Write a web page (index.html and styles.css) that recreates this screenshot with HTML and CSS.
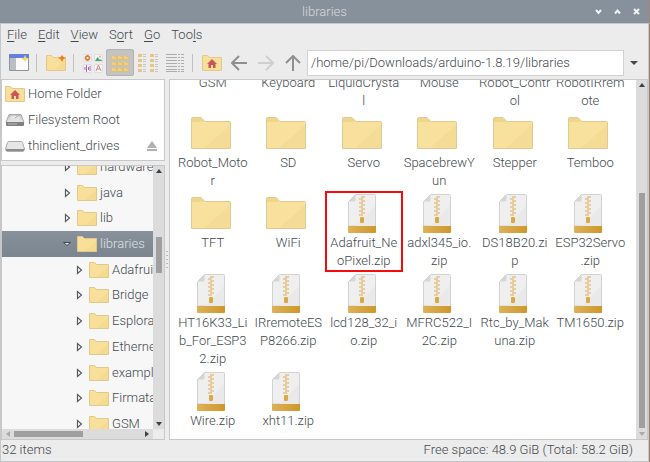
FILE: index.html
```html
<!DOCTYPE html>
<html lang="en">
<head>
<meta charset="utf-8">
<title>libraries</title>
<link rel="stylesheet" href="styles.css">
</head>
<body>
<svg class="defs" aria-hidden="true">
  <defs>
    <linearGradient id="gold" x1="0" x2="1"><stop offset="0" stop-color="#ddb25a"/><stop offset="1" stop-color="#cf972a"/></linearGradient>
    <linearGradient id="metal" x1="0" x2="0" y1="0" y2="1"><stop offset="0" stop-color="#bdbdbd"/><stop offset="1" stop-color="#ececec"/></linearGradient>
    <symbol id="folder" viewBox="0 0 40 40">
      <path d="M.5 34.500V4.500q0-1 1-1h8.500l4 4h24.500q1 0 1 1v26z" fill="#f8e19c" stroke="#e0ca93"/>
      <path d="M1 8V4h9l3.500 4z" fill="#f0d58c"/>
      <path d="M39 11v23H13z" fill="#f4dc96"/>
    </symbol>
    <symbol id="small-folder" viewBox="0 0 20 18">
      <path d="M.5 16.500v-15h5l2 2h12v13z" fill="#f8e09a" stroke="#e2c88a"/>
      <path d="M19 6v10H8z" fill="#f5db92"/>
    </symbol>
    <symbol id="home" viewBox="0 0 20 18">
      <path d="M.5 16.500v-15h5l2 2h12v13z" fill="#f8e09a" stroke="#e2c88a"/>
      <path d="M10 5l5 5h-1.500v4h-2.500v-3h-2v3H6.500v-4H5z" fill="#cc5555"/>
    </symbol>
    <symbol id="zip" viewBox="0 0 28 40">
      <path d="M.5 32V7.500l7-7h19q1 0 1 1V32z" fill="#efefef" stroke="#d2d2d2"/>
      <path d="M27 12v20H8z" fill="#e9e9e9"/>
      <path d="M.5 7.500l7-7v5.500q0 1.500-1.500 1.500z" fill="#d6d6d6"/>
      <path d="M0 32h28v6q0 1-1 1H1q-1 0-1-1z" fill="url(#gold)"/>
      <path d="M13 3h4M11 5h4M13 7h4M11 9h4M13 11h4M11 13h4M13 15h4M11 17h4M13 19h4M11 21h4" stroke="#e3c184" stroke-width="1.400"/>
      <rect x="12" y="23" width="4" height="6" rx="1" fill="#dba943"/>
    </symbol>
    <symbol id="closed" viewBox="0 0 10 12"><path d="M3.500 2.500v7l4-3.500z" fill="#fff" stroke="#555b60" stroke-width="1.200"/></symbol>
    <symbol id="open" viewBox="0 0 10 12"><path d="M1.500 4.500h7l-3.500 3z" fill="#e8eaec" stroke="#3d454c"/></symbol>
  </defs>
</svg>
<div class="window">
  <header class="titlebar">
    <h1>libraries</h1>
    <div class="controls">
      <button aria-label="Minimize"><svg width="9" height="9"><path d="M2 3l2.500 3L7 3"/></svg></button>
      <button aria-label="Maximize"><svg width="9" height="9"><path d="M2 6.500l2.500-3L7 6.500"/></svg></button>
      <button aria-label="Close"><svg width="9" height="9"><path d="M2 2l5 5M7 2L2 7"/></svg></button>
    </div>
  </header>
  <nav class="menubar">
    <button><u>F</u>ile</button><button><u>E</u>dit</button><button><u>V</u>iew</button><button>S<u>o</u>rt</button><button><u>G</u>o</button><button>Too<u>l</u>s</button>
  </nav>
  <div class="toolbar">
    <button aria-label="New window"><svg width="20" height="18"><path d="M.5.500h19v16H.500z" fill="#fafafa" stroke="#8f939b"/><path d="M0 0h20v4H0z" fill="#6580dc"/><path d="M1 4h6v12H1z" fill="#bcbfc2"/><path d="M16 1l1.200 2.600L20 5l-2.800 1L16 8l-1-2-3-1 3-1.400z" fill="#f7d472"/></svg></button>
    <span class="sep"></span>
    <button aria-label="New folder"><svg width="20" height="18"><use href="#small-folder"/><path d="M16 1l1.500 2 2.500 1-2.500 1L16 8l-1.500-3L12 4l2.500-1z" fill="#f27d1b"/></svg></button>
    <span class="sep"></span>
    <button aria-label="Thumbnail view"><svg width="20" height="20"><path d="M.500 1.500h8v7h-8zM11.500 1.500h8v7h-8zM.500 11.500h8v8h-8zM11.500 11.500h8v8h-8z" fill="#f7f7f7" stroke="#dfdfdf"/><circle cx="4.500" cy="5" r="2" fill="none" stroke="#d9803f" stroke-width="1.800"/><path d="M12 8l2.500-4L17 7l1-1 1 2z" fill="#4fa77d"/><circle cx="17" cy="3.500" r="1" fill="#e7ae51"/><path d="M2 14v3M3.500 12v7M5.500 14v3M7 13v5" stroke="#b565bb"/><path d="M13 18l2.500-6 2.500 6M14 16h3" fill="none" stroke="#d98787"/></svg></button>
    <button class="active" aria-label="Icon view"><svg width="20" height="20"><g fill="#ecd088" stroke="#ddbf78"><path id="mini" d="M1.500 2.500h2l1 1h2v3h-5z"/><use href="#mini" x="6"/><use href="#mini" x="12"/><use href="#mini" y="6"/><use href="#mini" x="6" y="6"/><use href="#mini" x="12" y="6"/><use href="#mini" y="12"/><use href="#mini" x="6" y="12"/><use href="#mini" x="12" y="12"/></g></svg></button>
    <button aria-label="Compact view"><svg width="20" height="20"><path d="M0 2.500h4M0 7.500h4M0 12.500h4M0 17.500h4M12 2.500h4M12 7.500h4M12 12.500h4M12 17.500h4" stroke="#e3c782" stroke-width="3"/><path d="M5 1.500h3M5 3.500h3M5 6.500h3M5 8.500h3M5 11.500h3M5 13.500h3M5 16.500h3M5 18.500h3M17 1.500h3M17 3.500h3M17 6.500h3M17 8.500h3M17 11.500h3M17 13.500h3M17 16.500h3M17 18.500h3" stroke="#c7c7c7"/></svg></button>
    <button aria-label="List view"><svg width="18" height="20"><path d="M0 1.500h18M0 4.500h18M0 7.500h18M0 10.500h18M0 13.500h18M0 16.500h18M0 18.500h18" stroke="#acacac" stroke-dasharray="11 1 2 1"/></svg></button>
    <span class="sep"></span>
    <button aria-label="Home"><svg width="20" height="18"><use href="#home"/></svg></button>
    <button aria-label="Back"><svg class="arrow" width="16" height="16"><path d="M16 8H1M8 1L1 8l7 7"/></svg></button>
    <button aria-label="Forward" disabled><svg class="arrow faded" width="16" height="16"><path d="M0 8h15M8 1l7 7-7 7"/></svg></button>
    <button aria-label="Up"><svg class="arrow" width="16" height="16"><path d="M8 16V1M1 8l7-7 7 7"/></svg></button>
    <input class="path" aria-label="Location" value="/home/pi/Downloads/arduino-1.8.19/libraries">
    <button class="drop" aria-label="Recent locations"><svg width="8" height="4"><path d="M0 0h8L4 4z" fill="#41474c"/></svg></button>
  </div>
  <main class="panes">
    <aside class="side">
      <ul class="places">
        <li><svg width="20" height="18"><use href="#home"/></svg>Home Folder</li>
        <li><svg width="20" height="18"><path d="M4 3.500h12l3 8H1z" fill="url(#metal)" stroke="#a8a8a8"/><ellipse cx="10" cy="7" rx="5" ry="2.500" fill="#e4e4e4"/><path d="M10 7l4-3" stroke="#aaa"/><path d="M1 11h18v3q0 1-1 1H2q-1 0-1-1z" fill="#808080"/><path d="M3 13h9" stroke="#bbb"/></svg>Filesystem Root</li>
        <li><svg width="20" height="18"><path d="M4 4.500h12q1 0 1.500 1l2 6.500q0 2-1.500 2H2q-1.500 0-1.500-2l2-6.500q.5-1 1.500-1z" fill="#e6e6e6" stroke="#aaa"/><path d="M1 12h18v1q0 1.500-1.500 1.500h-15Q1 14.500 1 13z" fill="#8c8c8c"/></svg>thinclient_drives<button class="eject" aria-label="Eject"><svg width="10" height="10"><path d="M0 7l5-7 5 7zM0 8h10v2H0z" fill="#aeb0b1"/></svg></button></li>
      </ul>
      <div class="tree">
        <div class="tree-view">
          <ul>
            <li><svg width="10" height="12"><use href="#closed"/></svg><svg class="f" width="20" height="18"><use href="#small-folder"/></svg>hardware</li>
            <li><svg width="10" height="12"><use href="#closed"/></svg><svg class="f" width="20" height="18"><use href="#small-folder"/></svg>java</li>
            <li><svg width="10" height="12"><use href="#closed"/></svg><svg class="f" width="20" height="18"><use href="#small-folder"/></svg>lib</li>
            <li class="selected"><svg width="10" height="12"><use href="#open"/></svg><svg class="f" width="20" height="18"><use href="#small-folder"/></svg>libraries</li>
            <li class="child"><svg width="10" height="12"><use href="#closed"/></svg><svg class="f" width="20" height="18"><use href="#small-folder"/></svg>Adafruit</li>
            <li class="child"><svg width="10" height="12"><use href="#closed"/></svg><svg class="f" width="20" height="18"><use href="#small-folder"/></svg>Bridge</li>
            <li class="child"><svg width="10" height="12"><use href="#closed"/></svg><svg class="f" width="20" height="18"><use href="#small-folder"/></svg>Esplora</li>
            <li class="child"><svg width="10" height="12"><use href="#closed"/></svg><svg class="f" width="20" height="18"><use href="#small-folder"/></svg>Ethernet</li>
            <li class="child"><svg width="10" height="12"><use href="#closed"/></svg><svg class="f" width="20" height="18"><use href="#small-folder"/></svg>example</li>
            <li class="child"><svg width="10" height="12"><use href="#closed"/></svg><svg class="f" width="20" height="18"><use href="#small-folder"/></svg>Firmata</li>
            <li class="child"><svg width="10" height="12"><use href="#closed"/></svg><svg class="f" width="20" height="18"><use href="#small-folder"/></svg>GSM</li>
          </ul>
        </div>
        <div class="vbar tree-bar"><svg width="8" height="4"><path d="M1 4h6L4 0z"/></svg><div class="track"><i></i></div><svg width="8" height="4"><path d="M1 0h6L4 4z"/></svg></div>
        <div class="hbar"><svg class="dim" width="4" height="8"><path d="M4 1v6L0 4z"/></svg><div class="track"><i></i></div><svg width="4" height="8"><path d="M0 1v6l4-3z"/></svg></div>
        <div class="corner"></div>
      </div>
    </aside>
    <div class="splitter"><svg width="2" height="20"><path d="M1 1v19" stroke="#b9b9b9" stroke-width="2" stroke-dasharray="1 3"/></svg></div>
    <section class="files">
      <ul class="grid">
        <li>GSM</li><li>Keyboard</li><li>LiquidCrysta<br>l</li><li>Mouse</li><li>Robot_Contr<br>ol</li><li>RobotIRrem<br>ote</li>
        <li><svg width="40" height="40"><use href="#folder"/></svg>Robot_Moto<br>r</li>
        <li><svg width="40" height="40"><use href="#folder"/></svg>SD</li>
        <li><svg width="40" height="40"><use href="#folder"/></svg>Servo</li>
        <li><svg width="40" height="40"><use href="#folder"/></svg>SpacebrewY<br>un</li>
        <li><svg width="40" height="40"><use href="#folder"/></svg>Stepper</li>
        <li><svg width="40" height="40"><use href="#folder"/></svg>Temboo</li>
        <li><svg width="40" height="40"><use href="#folder"/></svg>TFT</li>
        <li><svg width="40" height="40"><use href="#folder"/></svg>WiFi</li>
        <li class="marked"><svg width="28" height="40"><use href="#zip"/></svg>Adafruit_Ne<br>oPixel.zip</li>
        <li><svg width="28" height="40"><use href="#zip"/></svg>adxl345_io.<br>zip</li>
        <li><svg width="28" height="40"><use href="#zip"/></svg>DS18B20.zi<br>p</li>
        <li><svg width="28" height="40"><use href="#zip"/></svg>ESP32Servo<br>.zip</li>
        <li><svg width="28" height="40"><use href="#zip"/></svg>HT16K33_Li<br>b_For_ESP3<br>2.zip</li>
        <li><svg width="28" height="40"><use href="#zip"/></svg>IRremoteES<br>P8266.zip</li>
        <li><svg width="28" height="40"><use href="#zip"/></svg>lcd128_32_i<br>o.zip</li>
        <li><svg width="28" height="40"><use href="#zip"/></svg>MFRC522_I<br>2C.zip</li>
        <li><svg width="28" height="40"><use href="#zip"/></svg>Rtc_by_Mak<br>una.zip</li>
        <li><svg width="28" height="40"><use href="#zip"/></svg>TM1650.zip</li>
        <li><svg width="28" height="40"><use href="#zip"/></svg>Wire.zip</li>
        <li><svg width="28" height="40"><use href="#zip"/></svg>xht11.zip</li>
      </ul>
      <div class="vbar files-bar"><svg width="8" height="4"><path d="M1 4h6L4 0z"/></svg><div class="track"><i></i></div><svg class="dim" width="8" height="4"><path d="M1 0h6L4 4z"/></svg></div>
    </section>
  </main>
  <footer class="status"><span>32 items</span><span>Free space: 48.9 GiB (Total: 58.2 GiB)</span></footer>
</div>
</body>
</html>
```
FILE: styles.css
```css
* { box-sizing: border-box; }
body {
  margin: 0;
  padding-right: 1px;
  background: #a88470;
  color: #42494e;
  font: 300 13px/18px Roboto, "Liberation Sans", sans-serif;
}
ul { list-style: none; margin: 0; padding: 0; }
button {
  display: flex;
  align-items: center;
  justify-content: center;
  padding: 0;
  border: 0;
  background: none;
  color: inherit;
  font: inherit;
}
svg { display: block; flex: none; }
.defs { position: absolute; width: 0; height: 0; }

.window {
  display: flex;
  flex-direction: column;
  height: 100vh;
  border: 1px solid #c5c8ca;
  border-top: 0;
  background: #ececec;
}
.titlebar {
  display: grid;
  grid-template-columns: 1fr auto 1fr;
  align-items: center;
  flex: none;
  height: 24px;
  margin: 0 -1px;
  border-bottom: 1px solid #c2c8cd;
  background: #87919b;
}
h1 { grid-column: 2; margin: 0; color: #d6dade; font: inherit; }
.controls { display: flex; justify-content: flex-end; gap: 10px; padding-right: 8px; }
.controls path { fill: none; stroke: #f0f2f3; stroke-width: 2; }

.menubar { display: flex; flex: none; gap: 11px; height: 25px; padding: 0 6px; }
.menubar button { padding-bottom: 3px; }
.menubar u { text-underline-offset: 2px; }

.toolbar { display: flex; flex: none; align-items: center; height: 27px; padding-left: 4px; }
.toolbar button { flex: none; width: 27px; height: 27px; }
.toolbar .active { width: 28px; border: 1px solid #b2b2b2; border-radius: 2px; background: #c3c3c3; }
.sep { flex: none; width: 1px; height: 18px; margin: 0 5px 0 4px; background: #c0c0c0; }
.arrow { fill: none; stroke: #8f8f8f; stroke-width: 2; }
.faded { stroke: #cfcfcf; }
.path {
  flex: 1;
  min-width: 0;
  height: 26px;
  margin-left: 1px;
  padding: 0 3px;
  border: 1px solid #d2d2d2;
  background: #fff;
  color: inherit;
  font: inherit;
}
.toolbar .drop { width: 20px; margin-right: 4px; }

.panes { display: flex; flex: 1; min-height: 0; padding-top: 3px; }
.side { display: flex; flex: none; flex-direction: column; gap: 4px; width: 164px; }
.places { flex: none; padding: 1px 3px; border: 1px solid #c8c8c8; background: #fff; }
.places li { display: flex; align-items: center; gap: 3px; height: 26px; }
.eject { margin: 0 4px 0 auto; }

.tree {
  display: grid;
  flex: 1;
  grid-template-columns: 1fr 11px;
  grid-template-rows: 1fr 10px;
  min-height: 0;
  border: 1px solid #c8c8c8;
}
.tree-view { min-width: 0; overflow: hidden; background: #f7f7f7; }
.tree ul { display: grid; grid-auto-rows: 1fr; height: 283px; margin-top: -12px; }
.tree li { display: flex; align-items: center; padding-left: 60px; white-space: nowrap; }
.tree .child { padding-left: 72px; }
.tree .f { margin: 0 3px 0 5px; }
.tree .selected { background: linear-gradient(#87919b, #7a858f); color: #dde1e4; }

.vbar, .hbar { display: flex; align-items: center; justify-content: space-between; background: #dcdcdc; fill: #3b4146; }
.vbar { flex-direction: column; padding: 3px 0; }
.hbar { padding: 0 4px; }
.track { display: flex; flex: 1; }
.track i { display: block; background: #9f9f9f; }
.vbar .track { width: 6px; }
.vbar i { width: 6px; }
.dim { fill: #a9a9a9; }
.tree-bar .track { padding-top: 64px; }
.tree-bar i { height: 36px; }
.hbar .track { padding: 0 4px; }
.hbar i { width: 69px; height: 6px; }
.corner { background: #ececec; }

.splitter { display: flex; flex: none; align-items: center; width: 4px; justify-content: center; }
.files { display: flex; flex: 1; min-width: 0; border: 1px solid #c8c8c8; background: #fff; overflow: hidden; }
.grid {
  display: grid;
  flex: 1;
  grid-template-columns: repeat(6, minmax(0, 1fr));
  align-content: start;
  row-gap: 4px;
  min-width: 0;
  margin-top: -6px;
  padding: 0 8px 0 5px;
}
.grid li { position: relative; text-align: center; white-space: nowrap; }
.grid svg { box-sizing: content-box; margin: 0 auto; padding-right: 4px; }
.marked::after { content: ""; position: absolute; inset: -3px -1px -2px; border: 2px solid #f50b0b; }
.files-bar { width: 11px; }
.files-bar .track { flex: 1; padding: 106px 0 4px; }

.status { display: flex; flex: none; justify-content: space-between; height: 21px; padding: 1px 15px 0 1px; }
```
